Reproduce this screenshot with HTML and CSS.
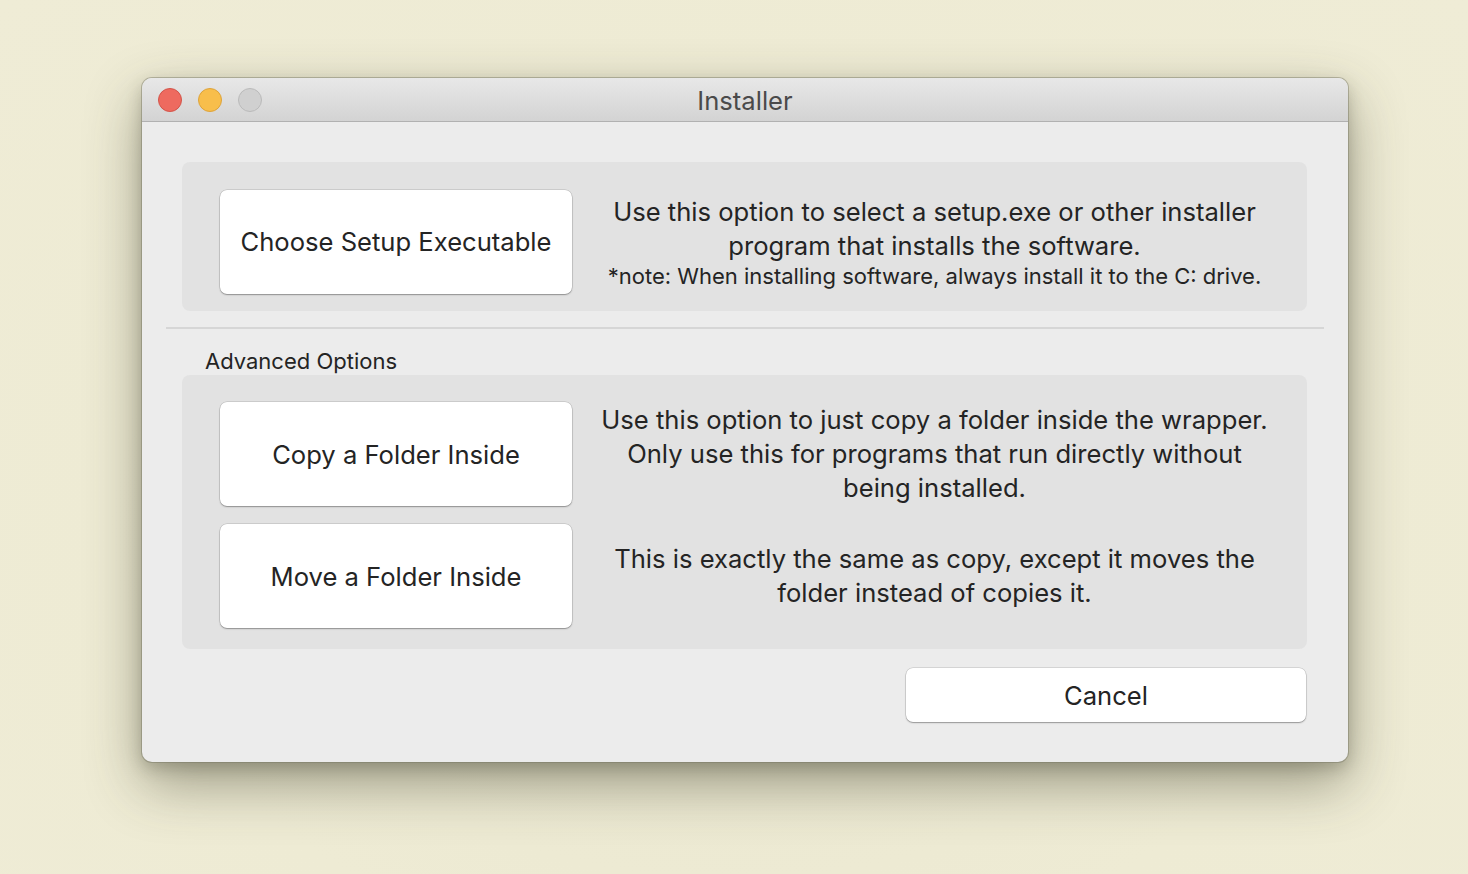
FILE: index.html
```html
<!DOCTYPE html>
<html>
<head>
<meta charset="utf-8">
<link rel="stylesheet" href="styles.css">
</head>
<body>
<div class="window">
  <div class="titlebar">
    <div class="lights">
      <span class="light red"></span>
      <span class="light yellow"></span>
      <span class="light grey"></span>
    </div>
    <div class="title">Installer</div>
  </div>
  <div class="content">
    <div class="panel panel-main">
      <button class="btn">Choose Setup Executable</button>
      <div class="desc">
        <p class="desc-main">Use this option to select a setup.exe or other installer program that installs the software.</p>
        <p class="desc-note">*note: When installing software, always install it to the C: drive.</p>
      </div>
    </div>
    <div class="separator"></div>
    <div class="section-label">Advanced Options</div>
    <div class="panel panel-adv">
      <div class="row">
        <button class="btn">Copy a Folder Inside</button>
        <div class="desc">
          <p class="desc-main">Use this option to just copy a folder inside the wrapper. Only use this for programs that run directly without being installed.</p>
        </div>
      </div>
      <div class="row">
        <button class="btn">Move a Folder Inside</button>
        <div class="desc">
          <p class="desc-main">This is exactly the same as copy, except it moves the folder instead of copies it.</p>
        </div>
      </div>
    </div>
    <div class="footer">
      <button class="btn btn-cancel">Cancel</button>
    </div>
  </div>
</div>
</body>
</html>
```
FILE: styles.css
```css
html, body {
  margin: 0;
  padding: 0;
}
body {
  width: 1468px;
  height: 874px;
  overflow: hidden;
  background: radial-gradient(ellipse at 50% 60%, #e9e6cf 0%, #eeebd4 60%, #efecd6 100%);
  font-family: "Inter", "Liberation Sans", sans-serif;
  color: #242424;
  padding-top: 78px;
  padding-left: 142px;
  box-sizing: border-box;
}
.window {
  width: 1206px;
  height: 684px;
  border-radius: 10px;
  overflow: hidden;
  background: #ececec;
  box-shadow: 0 0 0 1px rgba(120, 120, 100, 0.45), 0 22px 55px rgba(60, 60, 40, 0.45), 0 6px 16px rgba(60, 60, 40, 0.25);
}
.titlebar {
  height: 43px;
  border-bottom: 1px solid #b1b1b1;
  background: linear-gradient(#e8e8e8, #d3d3d3);
  display: flex;
  align-items: center;
  position: relative;
}
.lights {
  display: flex;
  gap: 16px;
  padding-left: 16px;
}
.light {
  width: 24px;
  height: 24px;
  border-radius: 50%;
  box-sizing: border-box;
}
.light.red {
  background: #ee6a5f;
  border: 1px solid #d2544a;
}
.light.yellow {
  background: #f8be4b;
  border: 1px solid #dda33b;
}
.light.grey {
  background: #d0d0d0;
  border: 1px solid #bababa;
}
.title {
  position: absolute;
  left: 0;
  right: 0;
  top: 9px;
  text-align: center;
  font-size: 25.6px;
  line-height: 28px;
  color: #4a4a4a;
  pointer-events: none;
}
.content {
  padding: 40px 41px 0 40px;
}
.panel {
  background: #e2e2e2;
  border-radius: 8px;
}
.panel-main {
  display: flex;
  align-items: center;
  height: 149px;
  box-sizing: border-box;
  padding: 27px 0 17px 38px;
}
.btn {
  font-family: inherit;
  background: #ffffff;
  border: none;
  border-radius: 7px;
  box-shadow: 0 0 0 0.5px rgba(0, 0, 0, 0.18), 0 1px 1.5px rgba(0, 0, 0, 0.3);
  width: 352px;
  height: 104px;
  font-size: 25.6px;
  color: #242424;
  padding: 0;
  flex-shrink: 0;
}
.desc {
  flex: 1;
  text-align: center;
  padding: 0 22px 0 12px;
}
.desc p {
  margin: 0 auto;
}
.desc-main {
  font-size: 25.6px;
  line-height: 34px;
  max-width: 680px;
}
.desc-note {
  font-size: 22px;
  line-height: 26px;
}
.separator {
  height: 2px;
  background: #d6d6d6;
  margin: 16px -17px 0 -16px;
}
.section-label {
  font-size: 22px;
  padding: 18px 0 0 23px;
  height: 28px;
  line-height: 28px;
}
.panel-adv {
  height: 274px;
  box-sizing: border-box;
  padding: 27px 0 21px 38px;
  display: flex;
  flex-direction: column;
  gap: 18px;
}
.row {
  display: flex;
  align-items: center;
}
.footer {
  display: flex;
  justify-content: flex-end;
  padding-top: 19px;
}
.btn-cancel {
  width: 400px;
  height: 54px;
  margin-right: 1px;
}
```
